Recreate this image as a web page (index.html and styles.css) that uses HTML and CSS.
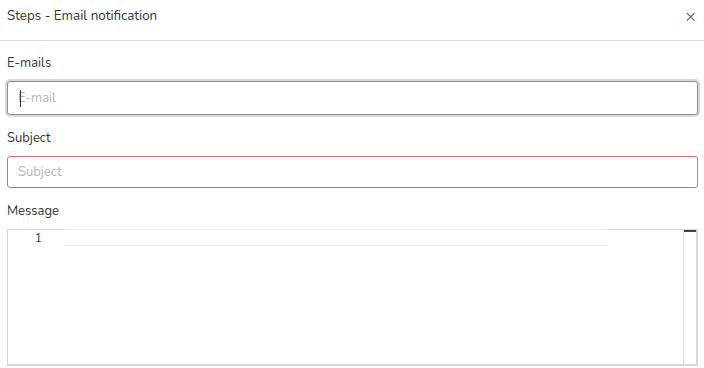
FILE: index.html
```html
<!DOCTYPE html>
<html>
<head>
  <title>Steps - Email notification</title>
  <link rel="stylesheet" href="styles.css">
</head>
<body>
  <div class="modal">
    <div class="modal-header">
      <span class="modal-title">Steps - Email notification</span>
      <span class="close">&times;</span>
    </div>
    <div class="modal-body">
      <label class="lab" for="emails">E-mails</label>
      <div class="field">
        <input class="inp focused" type="text" id="emails" placeholder="E-mail">
        <span class="caret"></span>
      </div>

      <label class="lab" for="subject">Subject</label>
      <input class="inp invalid" type="text" id="subject" placeholder="Subject">

      <label class="lab">Message</label>
      <div class="editor">
        <div class="gutter">
          <div class="line-no">1</div>
        </div>
        <div class="lines">
          <div class="active-line"></div>
        </div>
        <div class="scroll">
          <div class="scroll-thumb"></div>
        </div>
      </div>
    </div>
  </div>
</body>
</html>
```

FILE: styles.css
```css
body {
  margin: 0;
  background: #fff;
  font-family: "Nunito", "Lato", "Open Sans", sans-serif;
  font-size: 13px;
  color: #333;
}

.modal-header {
  display: flex;
  justify-content: space-between;
  align-items: center;
  height: 32px;
  padding: 0 8px 8px 7px;
  border-bottom: 1px solid #dedede;
}
.modal-title {
  line-height: 16px;
  font-size: 13.4px;
}
.close {
  font-size: 18px;
  color: #666;
  line-height: 16px;
}

.modal-body {
  display: flex;
  flex-direction: column;
  padding: 14px 6px 0 7px;
}

.lab {
  line-height: 16px;
  margin-bottom: 10px;
}

.field {
  position: relative;
}
.caret {
  position: absolute;
  left: 13px;
  top: 9px;
  width: 1px;
  height: 17px;
  background: #333;
}

.inp {
  box-sizing: border-box;
  width: 100%;
  height: 32px;
  margin: 0 0 15px 0;
  padding: 0 10px;
  border: 1px solid #ccc;
  border-radius: 3px;
  font-family: inherit;
  font-size: 13px;
  outline: none;
}
.inp::placeholder {
  color: #b4b4b4;
}
.focused {
  height: 34px;
  border-color: #8c9096;
  box-shadow: 0 0 0 2px #d6d9dd;
}
.invalid {
  border-color: #de6a6a;
}

.editor {
  display: flex;
  height: 137px;
  box-sizing: border-box;
  border: 1px solid #d3d6da;
  border-bottom-width: 2px;
}
.gutter {
  width: 57px;
}
.line-no {
  width: 34px;
  text-align: right;
  line-height: 16px;
  font-size: 12px;
  color: #333;
}
.lines {
  flex: 1;
}
.active-line {
  width: 542px;
  height: 15px;
  border-top: 1px solid #f0f0f0;
  border-bottom: 1px solid #ebebeb;
  box-sizing: content-box;
  margin-top: -1px;
}
.scroll {
  width: 12px;
  border-left: 1px solid #d9d9d9;
  border-right: 1px solid #d9d9d9;
}
.scroll-thumb {
  height: 2px;
  background: #444;
}
```
